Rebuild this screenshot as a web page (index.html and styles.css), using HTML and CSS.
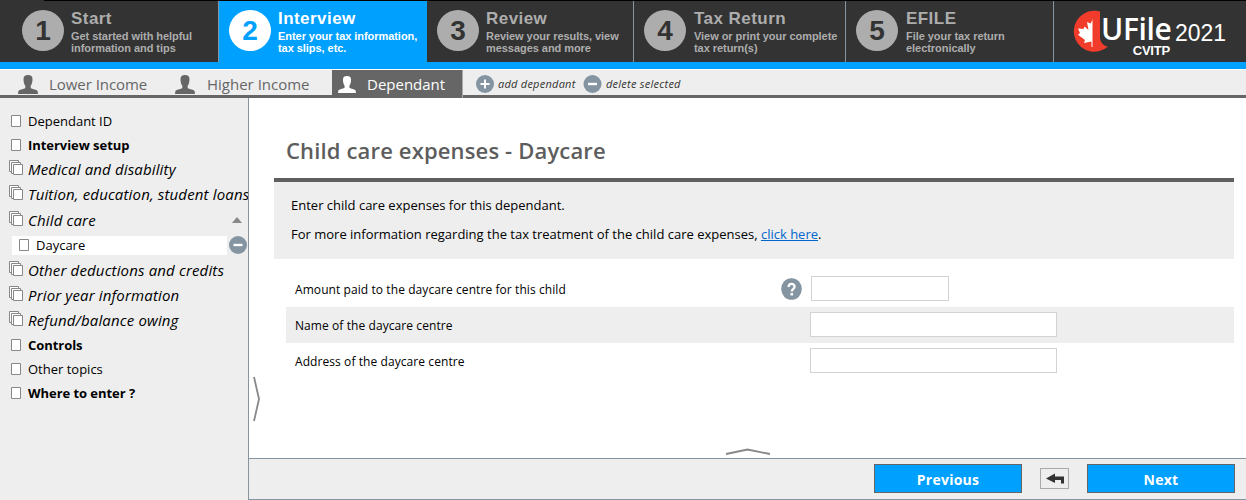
FILE: index.html
```html
<!DOCTYPE html>
<html lang="en">
<head>
<meta charset="utf-8">
<title>UFile CVITP 2021</title>
<link rel="stylesheet" href="styles.css">
</head>
<body>
<svg class="defs" width="0" height="0">
  <symbol id="person" viewBox="0 0 20 19"><path d="M10 0C7 0 5.500 1.200 5.500 4c0 3 .6 5.300 1.800 6.800V13C6 14.200.5 14.600.3 16.500L0 19h20l-.3-2.500c-.2-1.900-5.700-2.300-7-3.500v-2.200c1.200-1.500 1.800-3.800 1.800-6.800C14.500 1.200 13 0 10 0z"/></symbol>
  <symbol id="plus" viewBox="0 0 18 18"><circle cx="9" cy="9" r="9" fill="#8494a1"/><path d="M9 4.500v9M4.500 9h9" stroke="#fff" stroke-width="2"/></symbol>
  <symbol id="minus" viewBox="0 0 18 18"><circle cx="9" cy="9" r="9" fill="#8494a1"/><path d="M4.500 9h9" stroke="#fff" stroke-width="2.400"/></symbol>
  <symbol id="page" viewBox="0 0 10 12"><path d="M.5.5h9v11h-9z" fill="#fff" stroke="#888"/></symbol>
  <symbol id="pages" viewBox="0 0 14 15"><g fill="#fff" stroke="#888"><path d="M.5.5h9v11h-9z"/><path d="M2.500 2.500h9v11h-9z"/><path d="M4.500 4.500h9v10h-9z"/></g></symbol>
</svg>
<header class="steps">
  <div class="step start"><span class="num">1</span><div class="info"><h2>Start</h2><p>Get started with helpful<br>information and tips</p></div></div>
  <div class="step interview active"><span class="num">2</span><div class="info"><h2>Interview</h2><p>Enter your tax information,<br>tax slips, etc.</p></div></div>
  <div class="step review"><span class="num">3</span><div class="info"><h2>Review</h2><p>Review your results, view<br>messages and more</p></div></div>
  <div class="step return"><span class="num">4</span><div class="info"><h2>Tax Return</h2><p>View or print your complete<br>tax return(s)</p></div></div>
  <div class="step efile"><span class="num">5</span><div class="info"><h2>EFILE</h2><p>File your tax return<br>electronically</p></div></div>
  <div class="brand">
    <svg class="maple" width="37" height="42" viewBox="0 0 37 42"><path d="M28 1.500C25 .8 23 .8 21 .8A20.500 20.500 0 1 0 36 36.500C31 36 28 32 28 27z" fill="#f13c2b"/><path d="M21 9l-2.500 4.500-3.500-1.500 1.500 8-4-3.500-1 2.500-5.500-.5 2 4.500-2 1.800 7 5.200-1 3 7.500-1.500V37h1V9z" fill="#fff"/></svg>
    <div class="logo"><span class="ufile">UFile</span><span class="cvitp">CVITP</span></div>
    <span class="year">2021</span>
  </div>
</header>
<nav class="tabs">
  <div class="tab lower"><svg width="20" height="19"><use href="#person"/></svg><span>Lower Income</span></div>
  <div class="tab higher"><svg width="20" height="19"><use href="#person"/></svg><span>Higher Income</span></div>
  <div class="tab selected"><svg width="18" height="17"><use href="#person"/></svg><span>Dependant</span></div>
  <div class="actions"><svg width="18" height="18"><use href="#plus"/></svg><span class="add">add dependant</span><svg width="19" height="18"><use href="#minus"/></svg><span>delete selected</span></div>
</nav>
<div class="body">
  <aside class="side">
    <div class="item"><svg width="10" height="12"><use href="#page"/></svg><span>Dependant ID</span></div>
    <div class="item bold"><svg width="10" height="12"><use href="#page"/></svg><span>Interview setup</span></div>
    <div class="item group"><svg width="14" height="15"><use href="#pages"/></svg><span>Medical and disability</span></div>
    <div class="item group"><svg width="14" height="15"><use href="#pages"/></svg><span>Tuition, education, student loans</span></div>
    <div class="item group"><svg width="14" height="15"><use href="#pages"/></svg><span>Child care</span><svg class="caret" width="10" height="6"><path d="M5 0l5 6H0z" fill="#888"/></svg></div>
    <div class="child"><div class="child-box"><svg width="10" height="12"><use href="#page"/></svg><span>Daycare</span></div><svg width="18" height="18"><use href="#minus"/></svg></div>
    <div class="item group"><svg width="14" height="15"><use href="#pages"/></svg><span>Other deductions and credits</span></div>
    <div class="item group"><svg width="14" height="15"><use href="#pages"/></svg><span>Prior year information</span></div>
    <div class="item group"><svg width="14" height="15"><use href="#pages"/></svg><span>Refund/balance owing</span></div>
    <div class="item bold"><svg width="10" height="12"><use href="#page"/></svg><span>Controls</span></div>
    <div class="item"><svg width="10" height="12"><use href="#page"/></svg><span>Other topics</span></div>
    <div class="item bold"><svg width="10" height="12"><use href="#page"/></svg><span>Where to enter ?</span></div>
  </aside>
  <div class="right">
    <main class="main">
      <h1>Child care expenses - Daycare</h1>
      <section class="note"><p>Enter child care expenses for this dependant.</p><p class="more">For more information regarding the tax treatment of the child care expenses, <a href="#">click here</a>.</p></section>
      <form class="form">
        <div class="row"><label for="amt">Amount paid to the daycare centre for this child</label><svg class="help" width="21" height="22" viewBox="0 0 21 22"><ellipse cx="10.500" cy="11" rx="10.300" ry="10.800" fill="#8494a1"/><path d="M7.600 9c0-4 6-4 6-.3 0 2.200-2.800 2.300-2.800 4.800" fill="none" stroke="#fff" stroke-width="2.300"/><path d="M9.500 15h2.600v2.500H9.500z" fill="#fff"/></svg><input id="amt" class="short" type="text"></div>
        <div class="row shaded"><label for="nm">Name of the daycare centre</label><input id="nm" type="text"></div>
        <div class="row"><label for="ad">Address of the daycare centre</label><input id="ad" type="text"></div>
      </form>
      <svg class="open-side" width="8" height="46" viewBox="0 0 8 46"><path d="M1 1l5 22-5 22" fill="none" stroke="#888" stroke-width="1.800"/></svg>
      <svg class="open-foot" width="46" height="8" viewBox="0 0 46 8"><path d="M1 6l21.500-4.500L45 6" fill="none" stroke="#888" stroke-width="1.800"/></svg>
    </main>
    <footer class="foot">
      <button class="go">Previous</button>
      <button class="back"><svg width="20" height="12" viewBox="0 0 20 12"><path d="M1 5.500L10 .5v3h9v7h-3v-3.500h-6v3z" fill="#333"/></svg></button>
      <button class="go">Next</button>
    </footer>
  </div>
</div>
</body>
</html>
```
FILE: styles.css
```css
* { box-sizing: border-box; }
body { margin: 0; width: 1246px; height: 500px; overflow: hidden; background: #fff; color: #000; font-family: "Open Sans", "Noto Sans", sans-serif; font-size: 13px; display: flex; flex-direction: column; }
svg { display: block; flex: none; }
.defs { position: absolute; }
h1, h2, p { margin: 0; }
span, label { white-space: nowrap; }

.steps { height: 69px; flex: none; display: flex; background: linear-gradient(90deg, #333 44px, #000 44px) 0 0 / 100% 1px no-repeat border-box, #333; border-top: 1px solid transparent; border-bottom: 7px solid #00a0ff; font-family: "Liberation Sans", Arial, sans-serif; font-weight: bold; color: #adadad; }
.step { display: flex; padding-top: 9px; border-left: 1px solid #8795a1; flex: none; }
.start { width: 218px; padding-left: 22px; border-left: 0; }
.interview { width: 209px; padding-left: 10px; }
.review { width: 206px; padding-left: 10px; border-left: 0; }
.return { width: 212px; padding-left: 10px; }
.efile { width: 208px; padding-left: 10px; }
.active { background: #00a0ff; color: #fff; }
.num { width: 42px; height: 41px; border-radius: 50%; background: #adadad; color: #333; font-size: 28px; line-height: 41px; text-align: center; flex: none; }
.active .num { background: #fff; color: #00a0ff; }
.info { margin-left: 7px; white-space: nowrap; }
.info h2 { font-size: 17px; line-height: 18px; letter-spacing: .45px; }
.return .info, .efile .info { margin-left: 8px; }
.info p { font-size: 11px; line-height: 12px; margin-top: 2px; letter-spacing: -.05px; }
.brand { flex: 1; border-left: 1px solid #8795a1; display: flex; padding: 8px 0 0 18px; color: #fff; }
.logo { display: flex; flex-direction: column; margin-left: -8px; width: 69px; }
.ufile { font: 600 30px/34px "Open Sans", sans-serif; letter-spacing: -.4px; padding-top: 3px; }
.cvitp { font-size: 13px; line-height: 10px; align-self: flex-end; letter-spacing: -.2px; }
.maple { margin-top: 1px; }
.year { font-weight: normal; font-size: 23px; line-height: 48px; margin-left: 5px; }

.tabs { height: 29px; flex: none; display: flex; border-top: 1px solid #fff; border-bottom: 3px solid #666; background: #eee; color: #666; font-size: 15px; }
.tab { display: flex; align-items: center; flex: none; height: 28px; }
.tab span { line-height: 20px; }
.tab svg { fill: #666; }
.lower { width: 157px; padding-left: 18px; }
.lower span { margin-left: 11px; letter-spacing: -.05px; }
.higher { width: 175px; padding-left: 18px; }
.higher span { margin-left: 12px; }
.selected { width: 131px; padding-left: 6px; background: #666; color: #fff; border-right: 1px solid #aaa; }
.selected svg { fill: #fff; }
.selected span { margin-left: 11px; }
.actions { display: flex; align-items: center; padding: 2px 0 0 13px; color: #333; font-size: 11px; font-style: italic; letter-spacing: .25px; }
.actions span { margin-left: 4px; }
.actions .add { width: 77px; margin-right: 8px; }

.body { flex: 1; min-height: 0; display: flex; }
.side { width: 249px; flex: none; background: #eee; border-right: 1px solid #8795a1; padding-top: 11.500px; overflow: hidden; }
.item { height: 23.600px; display: flex; align-items: center; padding-left: 11px; }
.item span { margin-left: 7px; }
.bold { font-weight: bold; letter-spacing: -.05px; }
.group { height: 25.400px; padding-left: 9px; font-size: 15px; font-style: italic; letter-spacing: .15px; }
.group > svg:first-child { margin-top: -4px; }
.group span { margin-left: 5px; margin-top: -1px; }
.group .caret { margin: 0 6px 0 auto; }
.child { height: 24.600px; display: flex; align-items: center; padding-left: 12px; }
.child-box { width: 215px; height: 19px; background: #fff; display: flex; align-items: center; padding-left: 7px; margin-right: 2px; }
.child-box span { margin-left: 7px; }

.right { flex: 1; min-width: 0; display: flex; flex-direction: column; }
.main { flex: 1; position: relative; padding: 0 12px 0 25px; }
h1 { height: 80px; padding: 37px 0 0 12px; font-size: 22px; line-height: 30px; font-weight: 600; color: #5d5d5d; letter-spacing: .15px; }
.note { height: 81px; border-top: 4px solid #606060; background: #eee; padding: 14px 0 0 17px; line-height: 18px; white-space: nowrap; }
.more { margin-top: 11px; }
a { color: #0066cc; }
.form { padding: 12px 0 0 12px; }
.row { height: 36px; display: flex; align-items: center; padding-left: 9px; font-size: 12px; letter-spacing: .08px; }
.row label { width: 515px; }
.shaded { background: #eee; }
.row input { width: 247px; height: 25px; border: 1px solid #d3d3d3; background: #fff; padding: 0 4px; margin-top: -1px; }
.row:first-child label { width: 486px; }
.row .help { margin: -1px 9px 0 0; }
.row .short { width: 138px; }
.open-side { position: absolute; left: 4px; top: 278px; }
.open-foot { position: absolute; left: 476px; top: 350px; }
.foot { height: 42px; flex: none; border-top: 1px solid #8795a1; border-bottom: 1px solid #8795a1; background: #eee; display: flex; align-items: flex-start; justify-content: flex-end; padding: 5px 11px 0 0; }
.foot button { font-family: inherit; padding: 0; }
.go { width: 148px; height: 29px; background: #00a0ff; border: 1px solid #666; color: #fff; font-size: 14px; font-weight: bold; letter-spacing: .25px; }
.foot .go { padding-top: 1px; }
.back { width: 29px; height: 21px; margin: 4px 18px 0; background: #eee; border: 1px solid #aaa; display: flex; align-items: center; justify-content: center; }
```
